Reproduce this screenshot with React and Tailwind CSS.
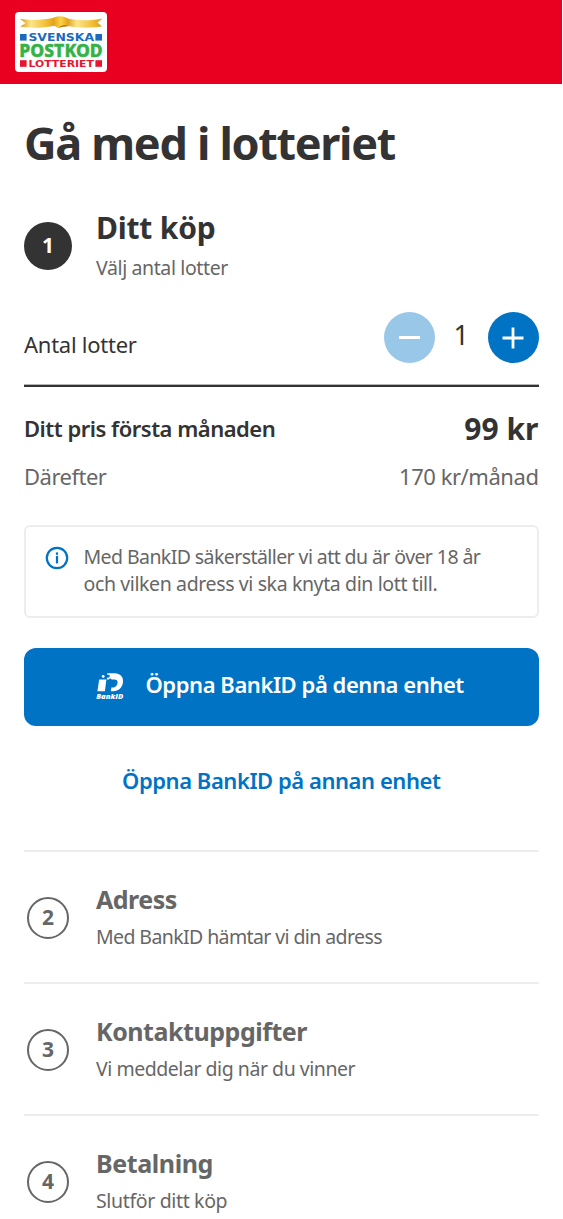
import React from "react";
import clsx from "clsx";

const STEPS = [
  {
    number: 2,
    title: "Adress",
    text: "Med BankID hämtar vi din adress",
    titleClass: "tracking-[-0.5px]",
    textClass: "tracking-[-0.6px]",
  },
  {
    number: 3,
    title: "Kontaktuppgifter",
    text: "Vi meddelar dig när du vinner",
    titleClass: "tracking-[-0.46px]",
    textClass: "tracking-[-0.46px]",
  },
  {
    number: 4,
    title: "Betalning",
    text: "Slutför ditt köp",
    titleClass: "tracking-[-0.4px]",
    textClass: "tracking-[-0.35px]",
  },
];

function Logo() {
  return (
    <svg width="92" height="60" viewBox="0 0 92 60" className="block">
      <defs>
        <linearGradient id="gold" x1="0" x2="1" y1="0" y2="0">
          <stop offset="0" stopColor="#d9980f" />
          <stop offset="0.3" stopColor="#fbe58a" />
          <stop offset="0.7" stopColor="#f3c03a" />
          <stop offset="1" stopColor="#dd9c14" />
        </linearGradient>
        <linearGradient id="fold" x1="0" x2="1" y1="0" y2="0">
          <stop offset="0" stopColor="#e8a616" />
          <stop offset="0.5" stopColor="#fbd24a" />
          <stop offset="1" stopColor="#e9a91c" />
        </linearGradient>
      </defs>
      <rect width="92" height="60" rx="4" fill="#fff" />

      {/* ribbon */}
      <path
        d="M5 6.8C15 8.6 28 8.2 41 5.2V13.4C28 16 15 16.4 5.2 14.6L10.4 11.2Z"
        fill="url(#gold)"
      />
      <path
        d="M51 6.2C62 8.8 76 8.8 87.6 6.4L82.6 10.6L87 14.6C76 16.2 62 16.2 51 13.8Z"
        fill="url(#gold)"
      />
      <path
        d="M39 5.4C44 3.4 49 4 52.5 6.2V13.4C48.5 12.2 45.5 13.4 43.2 16L39 13.6Z"
        fill="url(#fold)"
      />
      <path d="M43.2 16C45.5 13.2 48.5 12.2 52.5 13.4V14.6C49 14.2 46 15.6 43.2 16Z" fill="#b97a0c" />

      <g fill="#1b6ac1">
        <rect x="5" y="22" width="6.6" height="6.6" />
        <rect x="80.4" y="22" width="6.6" height="6.6" />
        <text
          x="13.4" y="28.7" textLength="65.6" lengthAdjust="spacingAndGlyphs"
          fontFamily="DejaVu Sans, sans-serif" fontWeight="700" fontSize="9.6"
        >
          SVENSKA
        </text>
      </g>
      <text
        x="4.3" y="44.8" textLength="83.4" lengthAdjust="spacingAndGlyphs"
        fontFamily="Noto Sans, sans-serif" fontWeight="800" fontSize="18"
        fill="#35b246" stroke="#35b246" strokeWidth="0.4"
      >
        POSTKOD
      </text>
      <g fill="#e9152f">
        <rect x="5" y="48.2" width="6.6" height="6.6" />
        <rect x="80.4" y="48.2" width="6.6" height="6.6" />
        <text
          x="13.4" y="54.9" textLength="65.6" lengthAdjust="spacingAndGlyphs"
          fontFamily="DejaVu Sans, sans-serif" fontWeight="700" fontSize="9.2"
        >
          LOTTERIET
        </text>
      </g>
    </svg>
  );
}

function BankIdIcon() {
  return (
    <svg width="28" height="28" viewBox="0 0 28 28" fill="#fff" className="block shrink-0">
      <path d="M3.2 7.4H10.4L8.9 19.2H1.4Z" />
      <circle cx="7.2" cy="4.4" r="1.4" />
      <path d="M11.3 1.2H18.5C24.4 1.2 27.4 4.7 27 9.8C26.6 15.8 22.6 19.2 17 19.2H14.8L15.4 15.4H16.8C19.8 15.4 21.3 13 21.6 10.4C21.8 8.4 20.4 7.4 18.4 7.4H15.6C15 6.2 13.4 6.2 12.8 7.4H10.8L11 5.6C12.6 6.2 14 5.2 13.8 3.8C13.6 2.8 12.4 2.4 11.2 2.8Z" />
      <text
        x="0.2" y="26.8" textLength="27" lengthAdjust="spacingAndGlyphs"
        fontFamily="Open Sans, sans-serif" fontStyle="italic" fontWeight="800" fontSize="7"
      >
        BankID
      </text>
    </svg>
  );
}

function InfoIcon() {
  return (
    <svg width="24" height="24" viewBox="0 0 24 24" className="block shrink-0">
      <circle cx="12" cy="12" r="10.2" fill="none" stroke="#0073c4" strokeWidth="2.2" />
      <rect x="10.9" y="6.4" width="2.2" height="2.4" fill="#0073c4" />
      <rect x="10.9" y="10" width="2.2" height="7.4" fill="#0073c4" />
    </svg>
  );
}

function Step({ number, title, text, titleClass, textClass }) {
  return (
    <li className="flex h-[132px] border-t-2 border-[#ededed] pt-[29px]">
      <span className="mt-4 ml-[3px] h-[42px] w-[42px] shrink-0 rounded-full border-2 border-[#666] text-center text-[21px] leading-[37px] font-bold">
        {number}
      </span>
      <div className="ml-[27px] whitespace-nowrap">
        <h3 className={clsx("text-[25px] leading-9 font-bold", titleClass)}>{title}</h3>
        <p className={clsx("mt-[6px] text-[19.5px] leading-7", textClass)}>{text}</p>
      </div>
    </li>
  );
}

export default function App() {
  return (
    <div className="h-[1219px] w-full overflow-hidden bg-white font-['Noto_Sans',sans-serif] text-[#666]">
      <header className="mr-px h-[84px] bg-[#e90021] pt-3 pl-[15px]">
        <Logo />
      </header>

      <main className="pt-[29px] pr-[24.5px] pl-6">
        <h1 className="text-[45px] leading-[60px] font-bold tracking-[-1.32px] whitespace-nowrap text-[#333]">
          Gå med i lotteriet
        </h1>

        {/* Step 1 is the open one */}
        <section className="mt-[35px] flex h-[73px]">
          <span className="mt-[14px] h-12 w-12 shrink-0 rounded-full bg-[#333] text-center text-[21px] leading-[47px] font-bold text-white">
            1
          </span>
          <div className="ml-6 whitespace-nowrap">
            <h2 className="text-[30px] leading-10 font-bold tracking-[-0.2px] text-[#333]">Ditt köp</h2>
            <p className="mt-[6px] text-[19.5px] leading-7 tracking-[-0.38px]">Välj antal lotter</p>
          </div>
        </section>

        <div className="mt-[31px] flex h-[72px] justify-between text-[#333]">
          <span className="pt-[17px] text-[22px] leading-[31px] tracking-[-0.25px]">Antal lotter</span>
          <div className="flex">
            <button className="flex h-[51px] w-[51px] items-center justify-center rounded-full bg-[#99c7e7]">
              <span className="h-[3px] w-[21px] bg-white" />
            </button>
            <span className="w-[52.5px] text-center text-[27px] leading-[46px]">1</span>
            <button className="flex h-[51px] w-[51px] items-center justify-center rounded-full bg-[#0073c4]">
              <svg width="22" height="22" viewBox="0 0 22 22" stroke="#fff" strokeWidth="2.8" className="block">
                <path d="M0.5 11H21.5M11 0.5V21.5" />
              </svg>
            </button>
          </div>
        </div>
        <div className="h-[3px] border-t border-[#b5b5b5] bg-[#333]" />

        <dl className="text-[22px]">
          <div className="mt-[21px] flex h-10 items-center justify-between text-[#333]">
            <dt className="font-semibold tracking-[-0.5px]">Ditt pris första månaden</dt>
            <dd className="text-[30px] font-bold">99 kr</dd>
          </div>
          <div className="mt-2 flex h-10 items-center justify-between">
            <dt className="tracking-[-0.5px]">Därefter</dt>
            <dd className="tracking-[-0.45px]">170 kr/månad</dd>
          </div>
        </dl>

        <div className="mt-[29px] flex h-[93px] rounded-md border-2 border-[#ededed] pt-4 pl-[19px]">
          <div className="pt-[3px]">
            <InfoIcon />
          </div>
          <p className="ml-[14.5px] text-[19.5px] leading-[27px] whitespace-nowrap">
            <span className="tracking-[-0.58px]">Med BankID säkerställer vi att du är över 18 år</span>
            <br />
            <span className="tracking-[-0.38px]">och vilken adress vi ska knyta din lott till.</span>
          </p>
        </div>

        <button className="mt-[30px] flex h-[78px] w-full rounded-xl bg-[#0073c4] pl-[71.5px] text-white">
          <span className="pt-6">
            <BankIdIcon />
          </span>
          <span className="ml-[22px] text-[22px] leading-[73px] font-semibold tracking-[-0.44px] whitespace-nowrap">
            Öppna BankID på denna enhet
          </span>
        </button>
        <button className="mt-[34px] block h-10 w-full text-center text-[22px] leading-[38px] font-semibold tracking-[-0.45px] text-[#0073c4]">
          Öppna BankID på annan enhet
        </button>

        <ul className="mt-[50px]">
          {STEPS.map((step) => (
            <Step key={step.number} {...step} />
          ))}
        </ul>
      </main>
    </div>
  );
}
